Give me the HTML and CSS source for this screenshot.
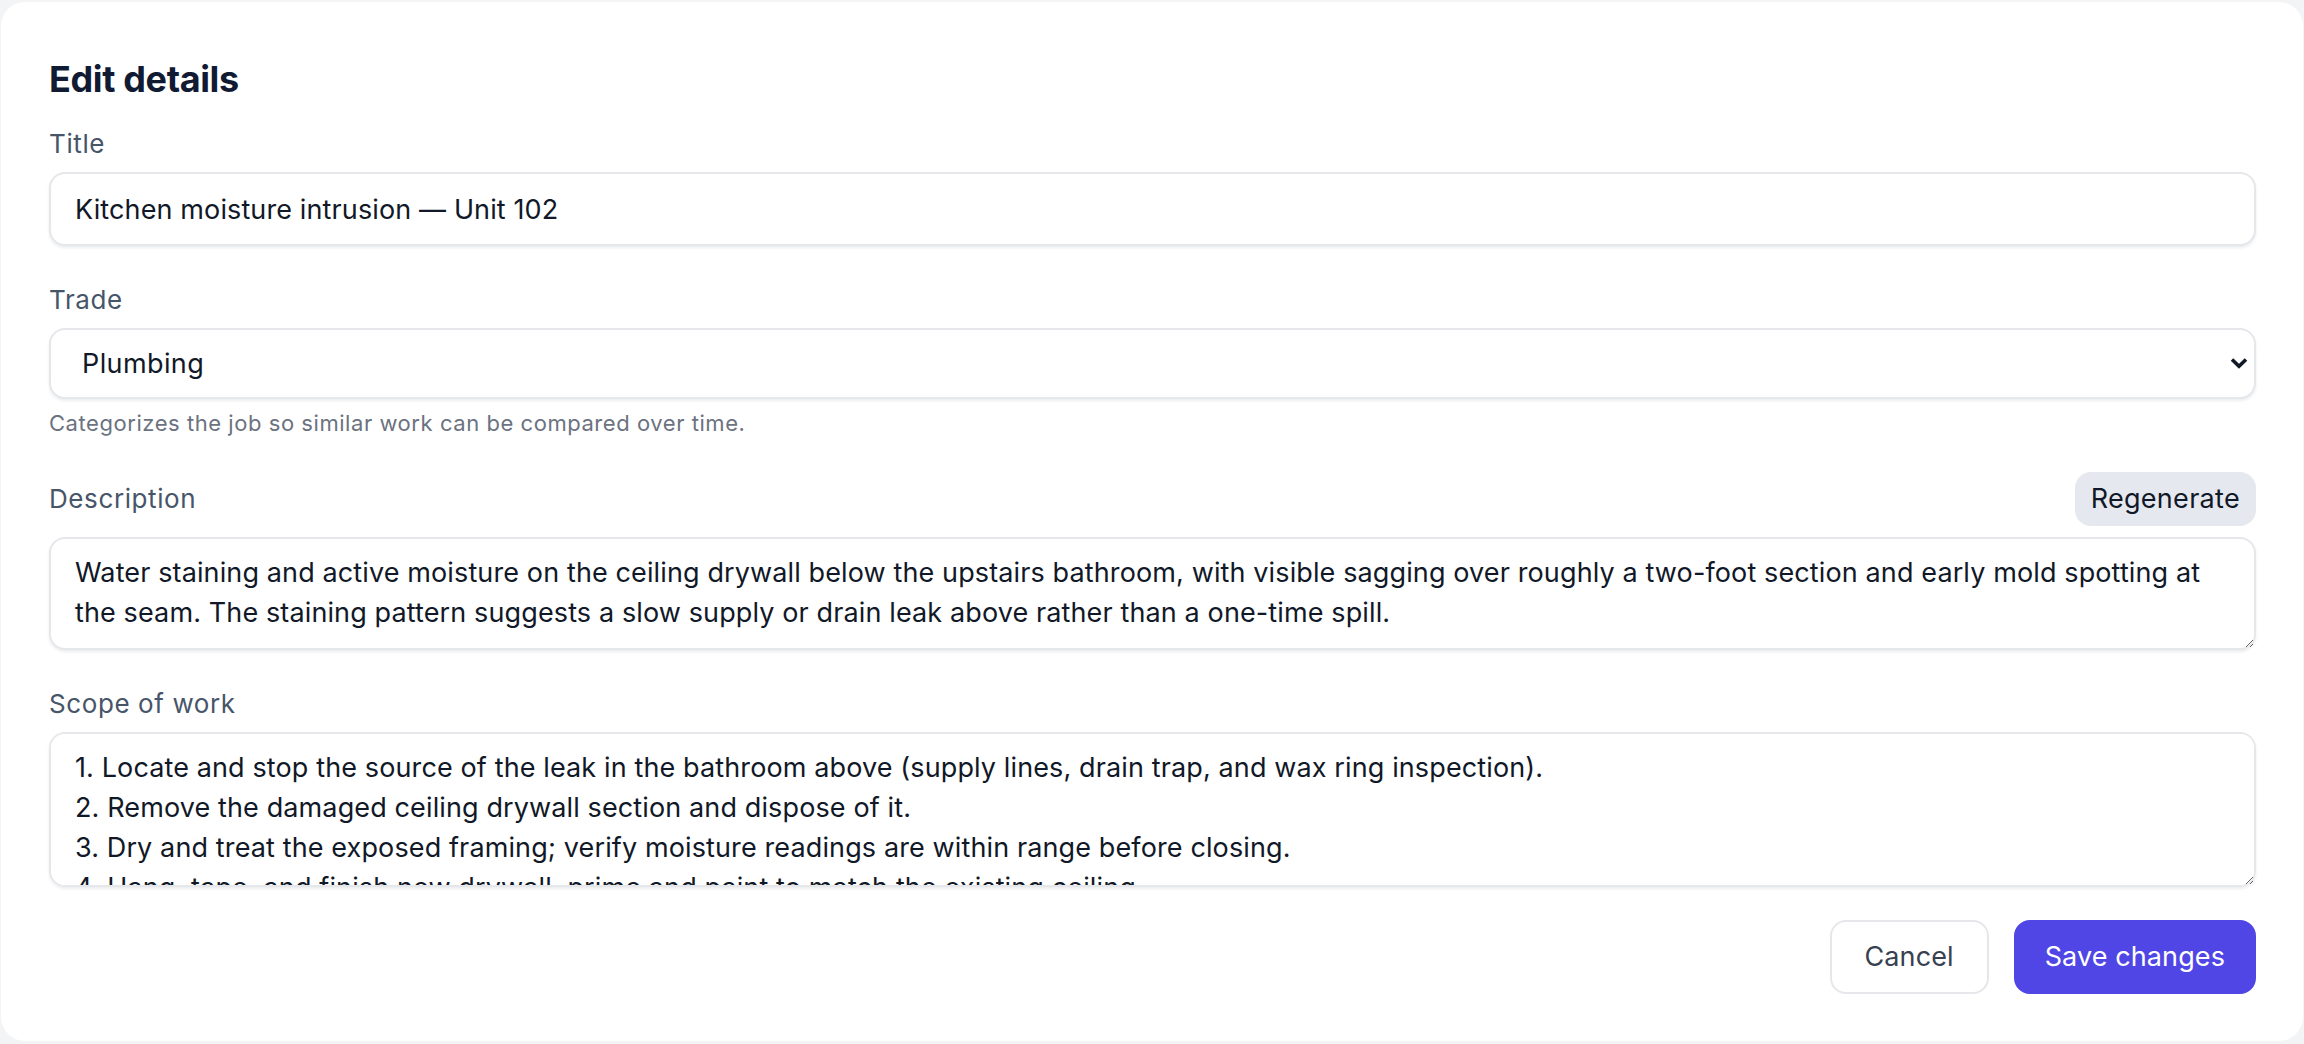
FILE: index.html
```html
<!DOCTYPE html>
<html lang="en">
<head>
<meta charset="utf-8">
<title>Edit details</title>
<link rel="stylesheet" href="styles.css">
</head>
<body>
<div class="card">
  <h1 class="heading">Edit details</h1>
  <form class="form">
    <div class="field">
      <label class="label" for="title">Title</label>
      <input class="control input" id="title" type="text" value="Kitchen moisture intrusion — Unit 102">
    </div>
    <div class="field field-gap">
      <label class="label" for="trade">Trade</label>
      <div class="select-wrap">
        <select class="control select" id="trade">
          <option>Plumbing</option>
          <option>Electrical</option>
          <option>Drywall</option>
        </select>
        <svg class="chevron" width="18" height="12" viewBox="0 0 18 12" aria-hidden="true"><path d="M2 2.5 L9 9.2 L16 2.5" fill="none" stroke="#111827" stroke-width="3.6"/></svg>
      </div>
      <p class="help">Categorizes the job so similar work can be compared over time.</p>
    </div>
    <div class="field field-gap-sm">
      <div class="label-row">
        <label class="label label-inline" for="desc">Description</label>
        <button type="button" class="btn-soft">Regenerate</button>
      </div>
      <textarea class="control textarea textarea-desc" id="desc">Water staining and active moisture on the ceiling drywall below the upstairs bathroom, with visible sagging over roughly a two-foot section and early mold spotting at the seam. The staining pattern suggests a slow supply or drain leak above rather than a one-time spill.</textarea>
    </div>
    <div class="field field-gap">
      <label class="label" for="scope">Scope of work</label>
      <textarea class="control textarea textarea-scope" id="scope">1. Locate and stop the source of the leak in the bathroom above (supply lines, drain trap, and wax ring inspection).
2. Remove the damaged ceiling drywall section and dispose of it.
3. Dry and treat the exposed framing; verify moisture readings are within range before closing.
4. Hang, tape, and finish new drywall, prime and paint to match the existing ceiling.
5. Confirm the repair with a follow-up moisture reading.</textarea>
    </div>
    <div class="actions">
      <button type="button" class="btn btn-outline">Cancel</button>
      <button type="button" class="btn btn-primary">Save changes</button>
    </div>
  </form>
</div>
</body>
</html>
```

FILE: styles.css
```css
* { box-sizing: border-box; }

html, body {
  margin: 0;
  padding: 0;
}

body {
  background: #f3f4f6;
  font-family: Inter, "Noto Sans", "Liberation Sans", sans-serif;
  color: #111827;
  padding: 2px 1px 2px 1px;
}

.card {
  background: #ffffff;
  border-radius: 24px;
  padding: 55px 47px 47px 48px;
}

.heading {
  margin: 0;
  font-size: 36px;
  line-height: 44px;
  font-weight: 700;
  letter-spacing: -0.01em;
  color: #111a33;
}

.form {
  margin: 25px 0 0 0;
  display: flex;
  flex-direction: column;
}

.field {
  display: flex;
  flex-direction: column;
}

.field-gap { margin-top: 36px; }
.field-gap-sm { margin-top: 33px; }

.label {
  display: block;
  font-size: 26px;
  line-height: 36px;
  letter-spacing: 0.6px;
  color: #475569;
  margin-bottom: 10px;
}

.label-row {
  display: flex;
  align-items: center;
  justify-content: space-between;
  height: 54px;
  margin-bottom: 11px;
}

.label-inline { margin-bottom: 0; }

.control {
  width: 100%;
  font-family: Inter, "Noto Sans", "Liberation Sans", sans-serif;
  font-size: 27px;
  line-height: 40px;
  letter-spacing: 0.12px;
  color: #111827;
  background: #ffffff;
  border: 2px solid #e5e7eb;
  border-radius: 16px;
  box-shadow: 0 2px 3px rgba(15, 23, 42, 0.08);
  outline: none;
  margin: 0;
}

.input {
  height: 74px;
  padding: 15px 24px;
}

.select-wrap {
  position: relative;
}

.select {
  appearance: none;
  -webkit-appearance: none;
  height: 71px;
  padding: 0 40px 0 31px;
  letter-spacing: 0.4px;
}

.chevron {
  position: absolute;
  right: 8px;
  top: 29px;
  pointer-events: none;
}

.help {
  margin: 8px 0 0 0;
  font-size: 22px;
  line-height: 32px;
  letter-spacing: 0.55px;
  color: #6b7280;
}

.textarea {
  display: block;
  padding: 14px 24px;
  resize: vertical;
  scrollbar-width: none;
}

.textarea::-webkit-scrollbar { display: none; }

.textarea-desc { height: 113px; }
.textarea-scope { height: 155px; }

.btn-soft {
  font-family: Inter, "Noto Sans", "Liberation Sans", sans-serif;
  font-size: 27px;
  line-height: 40px;
  letter-spacing: 0.3px;
  color: #111827;
  background: #e5e8ef;
  border: 0;
  border-radius: 16px;
  height: 54px;
  padding: 0 16px;
  cursor: pointer;
}

.actions {
  display: flex;
  justify-content: flex-end;
  gap: 25px;
  margin-top: 33px;
}

.btn {
  font-family: Inter, "Noto Sans", "Liberation Sans", sans-serif;
  font-size: 27px;
  line-height: 40px;
  letter-spacing: 0.1px;
  height: 74px;
  border-radius: 16px;
  cursor: pointer;
}

.btn-outline {
  background: #ffffff;
  color: #374151;
  border: 2px solid #e5e7eb;
  padding: 0 33px;
}

.btn-primary {
  background: #4f46e5;
  color: #ffffff;
  border: 2px solid #4f46e5;
  padding: 0 29px;
}
```
